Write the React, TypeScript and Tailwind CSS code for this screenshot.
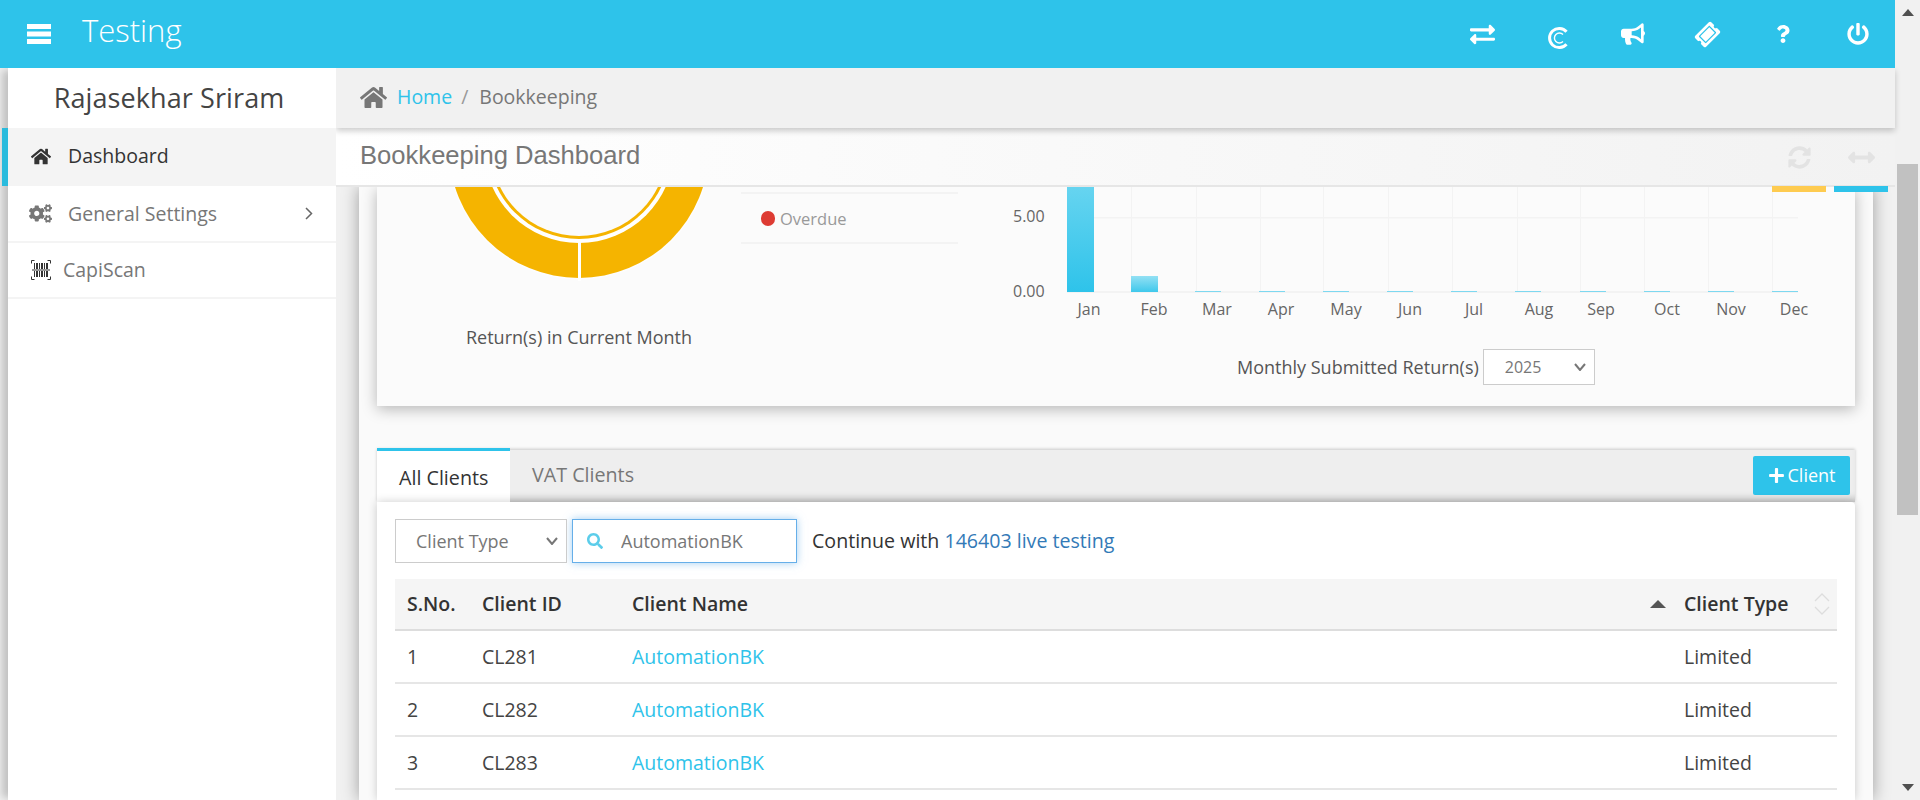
import React from "react";
import { FaExchangeAlt, FaBullhorn, FaTicketAlt, FaQuestion, FaPowerOff, FaHome, FaCogs, FaSyncAlt, FaArrowsAltH, FaSearch, FaPlus } from "react-icons/fa";

const months = ["Jan", "Feb", "Mar", "Apr", "May", "Jun", "Jul", "Aug", "Sep", "Oct", "Nov", "Dec"];
const labelX = [89, 154, 217, 281, 346, 410, 474, 539, 601, 667, 731, 794];
const gridX = [131, 196, 260, 323, 388, 452, 517, 580, 644, 708, 772];
const smallBars = [195, 259, 323, 387, 451, 515, 580, 644, 708, 772];
const rows = [
  ["1", "CL281"],
  ["2", "CL282"],
  ["3", "CL283"],
];

function CopyrightIcon() {
  return (
    <svg className="mt-[7px]" width="22" height="24" viewBox="0 0 22 24" fill="none" stroke="white">
      <path d="M19.5 5.8A9.6 9.6 0 1 0 19.5 18.2" strokeWidth="3" />
      <path d="M16 8.5A5 5 0 1 0 16 15.5" strokeWidth="1.4" />
    </svg>
  );
}

function ScanIcon() {
  return (
    <svg width="20" height="20" viewBox="0 0 20 20" fill="none">
      <path d="M3.5 .5H.5V3.5M16.5 .5H19.5V3.5M3.5 19.5H.5V16.5M16.5 19.5H19.5V16.5" stroke="#333" />
      <path d="M3 3h1v6H3zM5 3h2v6H5zM8 3h1v6H8zM10 3h2v6h-2zM13 3h1v6h-1zM15 3h2v6h-2zM3 11h1v6H3zM5 11h2v6H5zM8 11h1v6H8zM10 11h2v6h-2zM13 11h1v6h-1zM15 11h2v6h-2z" fill="#333" />
      <path d="M1 10h18" stroke="#333" />
    </svg>
  );
}

function Chevron() {
  return (
    <svg className="absolute right-[9px] top-1/2 -translate-y-1/2 pointer-events-none" width="12" height="8" viewBox="0 0 12 8" fill="none" stroke="#777" strokeWidth="2">
      <path d="M1 1l5 6 5-6" />
    </svg>
  );
}

function Header() {
  return (
    <header className="h-[68px] bg-[#2ec3ea] flex items-center justify-between shrink-0 relative z-30">
      <div className="flex items-center text-white">
        <svg className="ml-[27px]" width="24" height="20" viewBox="0 0 24 20" fill="white">
          <path d="M0 0h24v5H0zM0 7.5h24v5H0zM0 15h24v5H0z" />
        </svg>
        <span className="ml-[31px] text-[31px] font-light leading-none -mt-[8px]">Testing</span>
      </div>
      <div className="flex items-center text-white">
        {[
          <FaExchangeAlt key="a" className="text-[25px]" />,
          <CopyrightIcon key="b" />,
          <FaBullhorn key="c" className="text-[24px]" />,
          <FaTicketAlt key="d" className="text-[23px] -rotate-45" />,
          <FaQuestion key="e" className="text-[18px]" />,
          <FaPowerOff key="f" className="text-[22px]" />,
        ].map((icon, i) => (
          <div key={i} className="w-[75px] flex justify-center">{icon}</div>
        ))}
      </div>
    </header>
  );
}

function Sidebar() {
  return (
    <aside className="w-[328px] ml-[8px] bg-white shadow-[-8px_0_8px_-2px_rgba(0,0,0,0.2)] z-20 shrink-0 relative">
      <div className="h-[60px] flex items-center justify-center pr-[6px] text-[27px] text-[#444] tracking-[0.1px]">Rajasekhar Sriram</div>
      <div className="h-[58px] flex items-center bg-[#f4f4f4] border-l-[6px] border-[#2abbdd] -ml-[6px] pl-[23px] pb-[2px] text-[#333] text-[19.5px]">
        <FaHome className="text-[19px] w-[20px]" />
        <span className="ml-[17px]">Dashboard</span>
      </div>
      <div className="h-[57px] flex items-center border-b-2 border-[#f4f4f4] pl-[21px] pr-[23px] text-[#777] text-[19.5px]">
        <FaCogs className="text-[23px] w-[23px]" />
        <span className="ml-[16px] flex-1">General Settings</span>
        <svg width="8" height="13" viewBox="0 0 8 13" fill="none" stroke="#666" strokeWidth="1.5"><path d="M1 1l5.5 5.5L1 12" /></svg>
      </div>
      <div className="h-[56px] flex items-center border-b-2 border-[#f4f4f4] pl-[23px] text-[#777] text-[19.5px]">
        <ScanIcon />
        <span className="ml-[12px]">CapiScan</span>
      </div>
    </aside>
  );
}

function Donut() {
  return (
    <svg width="268" height="100" viewBox="445 187 268 100">
      <circle cx="579" cy="148" r="131.5" fill="#fdfdfd" />
      <circle cx="579" cy="148" r="130" fill="#f5b400" />
      <circle cx="579" cy="148" r="95" fill="#fff" />
      <circle cx="579" cy="148" r="91" fill="#f5b400" />
      <circle cx="579" cy="148" r="88" fill="#fbfbfb" />
      <rect x="578" y="241" width="3" height="40" fill="#fff" />
    </svg>
  );
}

function BarChart() {
  return (
    <svg width="840" height="143" viewBox="0 0 840 143" className="block">
      <defs>
        <linearGradient id="barA" x1="0" y1="0" x2="0" y2="1">
          <stop offset="0" stopColor="#66d4f0" />
          <stop offset="1" stopColor="#2ec3ea" />
        </linearGradient>
        <linearGradient id="barB" x1="0" y1="0" x2="0" y2="1">
          <stop offset="0" stopColor="#93e0f4" />
          <stop offset="1" stopColor="#3fc8ec" />
        </linearGradient>
      </defs>
      {gridX.map((x) => (
        <line key={x} x1={x + 0.5} x2={x + 0.5} y1="0" y2="105" stroke="#f3f3f3" />
      ))}
      <rect x="67" y="30" width="731" height="1.5" fill="#f3f3f3" />
      <rect x="67" y="104" width="731" height="2" fill="#f3f3f3" />
      <rect x="67" y="0" width="27" height="105" fill="url(#barA)" />
      <rect x="131" y="89" width="27" height="16" fill="url(#barB)" />
      {smallBars.map((x) => (
        <rect key={x} x={x} y="104" width="26" height="1" fill="#7dd8f0" />
      ))}
      <g fontSize="16" fill="#666" textAnchor="middle">
        {months.map((m, i) => (
          <text key={m} x={labelX[i]} y="128">{m}</text>
        ))}
      </g>
      <g fontSize="16" fill="#666">
        <text x="13" y="35">5.00</text>
        <text x="13" y="110">0.00</text>
      </g>
    </svg>
  );
}

function SummaryCard() {
  return (
    <section className="h-[219px] bg-[#fbfbfb] shadow-[0_3px_14px_rgba(0,0,0,0.28)] flex shrink-0">
      <div className="w-[364px] pl-[40px] flex flex-col items-center">
        <Donut />
        <div className="mt-[37px] text-[18px] text-[#555]">Return(s) in Current Month</div>
      </div>
      <div className="w-[217px] mt-[5px] self-start h-[52px] border-y-2 border-[#f3f3f3] flex items-center pl-[20px]">
        <span className="w-[14px] h-[15px] rounded-full bg-[#dd3b33]" />
        <span className="ml-[5px] mt-[2px] text-[16.5px] text-[#999]">Overdue</span>
      </div>
      <div className="ml-[42px] flex-1 min-w-0">
        <BarChart />
        <div className="ml-[237px] mt-[19px] flex items-center">
          <span className="text-[18px] text-[#555]">Monthly Submitted Return(s)</span>
          <div className="relative ml-[4px] w-[112px] h-[36px]">
            <select defaultValue="2025" className="appearance-none w-full h-full border border-[#ccc] bg-white pl-[21px] text-[16px] text-[#777]">
              <option>2025</option>
            </select>
            <Chevron />
          </div>
        </div>
      </div>
    </section>
  );
}

function ClientsCard() {
  return (
    <section className="mt-[44px] flex-1 flex flex-col min-h-0">
      <div className="h-[52px] bg-[#eeeeee] shadow-[inset_0_-8px_8px_-6px_rgba(0,0,0,0.22),0_-1px_3px_rgba(0,0,0,0.2)] flex items-start shrink-0">
        <div className="w-[133px] h-[54px] -mt-[2px] bg-white border-t-[3px] border-[#2ec3ea] flex items-center pl-[22px] pt-[2px] text-[19.7px] text-[#333]">All Clients</div>
        <div className="ml-[22px] h-[50px] flex items-center text-[19.7px] text-[#777]">VAT Clients</div>
        <button className="ml-auto mr-[5px] mt-[6px] w-[97px] h-[39px] bg-[#2ec3ea] rounded-[2px] flex items-center justify-center text-white text-[18px]">
          <FaPlus className="text-[17px] mr-[3px]" />
          Client
        </button>
      </div>
      <div className="flex-1 bg-white rounded-tr-[4px] px-[18px] pt-[17px] shadow-[0_0_10px_rgba(0,0,0,0.2)] min-h-0 overflow-hidden">
        <div className="flex items-center h-[44px]">
          <div className="relative w-[172px] h-[44px]">
            <select defaultValue="t" className="appearance-none w-full h-full border border-[#ccc] bg-white pl-[20px] text-[18px] text-[#777]">
              <option value="t">Client Type</option>
            </select>
            <Chevron />
          </div>
          <div className="ml-[5px] w-[225px] h-[44px] border border-[#66afe9] shadow-[0_0_8px_rgba(102,175,233,0.6)] flex items-center pl-[14px]">
            <FaSearch className="text-[16px] text-[#5ccdea] shrink-0" />
            <input defaultValue="AutomationBK" className="ml-[18px] w-[170px] text-[18px] text-[#777] outline-none" />
          </div>
          <span className="ml-[15px] text-[19.6px] text-[#333]">
            Continue with <span className="text-[#337ab7]">146403 live testing</span>
          </span>
        </div>
        <table className="mt-[16px] w-[1442px] table-fixed border-collapse text-[19.5px] text-[#444]">
          <colgroup>
            <col className="w-[75px]" />
            <col className="w-[150px]" />
            <col className="w-[1052px]" />
            <col className="w-[165px]" />
          </colgroup>
          <thead>
            <tr className="h-[51px] bg-[#f5f5f5] border-b-2 border-[#ddd] text-left font-semibold text-[#333]">
              <th className="pl-[12px] font-semibold">S.No.</th>
              <th className="pl-[12px] font-semibold">Client ID</th>
              <th className="pl-[12px] pr-[6px] font-semibold">
                <div className="flex items-center justify-between">
                  Client Name
                  <svg width="16" height="9" viewBox="0 0 16 9"><path d="M8 0L16 8H0z" fill="#555" /></svg>
                </div>
              </th>
              <th className="pl-[12px] pr-[7px] font-semibold">
                <div className="flex items-center justify-between">
                  Client Type
                  <svg width="16" height="22" viewBox="0 0 16 22" fill="none" stroke="#ddd" strokeWidth="1.3"><path d="M1 8l7-7 7 7M1 14l7 7 7-7" /></svg>
                </div>
              </th>
            </tr>
          </thead>
          <tbody>
            {rows.map(([n, id]) => (
              <tr key={n} className="h-[53px] border-b-2 border-[#e6e6e6]">
                <td className="pl-[12px]">{n}</td>
                <td className="pl-[12px]">{id}</td>
                <td className="pl-[12px] text-[#2ec3ea]">AutomationBK</td>
                <td className="pl-[12px]">Limited</td>
              </tr>
            ))}
          </tbody>
        </table>
      </div>
    </section>
  );
}

function Scrollbar() {
  return (
    <div className="w-[25px] h-[800px] bg-[#f1f1f1] flex flex-col items-center shrink-0">
      <svg className="mt-[9px]" width="12" height="7" viewBox="0 0 12 7"><path d="M6 0l6 7H0z" fill="#505050" /></svg>
      <div className="mt-[148px] w-[21px] h-[351px] bg-[#c1c1c1]" />
      <svg className="mt-auto mb-[9px]" width="12" height="7" viewBox="0 0 12 7"><path d="M6 7L0 0h12z" fill="#505050" /></svg>
    </div>
  );
}

export default function App() {
  return (
    <div className="w-[1920px] h-[800px] flex overflow-hidden bg-[#f1f1f1] font-['Open_Sans',sans-serif]">
      <div className="w-[1895px] flex flex-col shrink-0">
        <Header />
        <div className="flex-1 flex min-h-0 bg-[#f1f1f1]">
          <Sidebar />
          <main className="flex-1 flex flex-col min-w-0 bg-[#f1f1f1]">
            <div className="h-[60px] bg-[#f1f1f1] flex items-center pl-[24px] pb-[2px] shadow-[0_3px_6px_rgba(0,0,0,0.2)] z-10 shrink-0 text-[19.5px]">
              <FaHome className="text-[27px] text-[#777]" />
              <span className="ml-[10px] text-[#2ec3ea]">Home</span>
              <span className="ml-[9px] text-[#999]">/</span>
              <span className="ml-[11px] text-[#777]">Bookkeeping</span>
            </div>
            <div className="h-[59px] bg-gradient-to-r from-white to-[#f2f2f2] border-b-2 border-[#e6e6e6] flex items-start pl-[24px] z-[5] shrink-0">
              <h1 className="mt-[12px] text-[25.6px] leading-[30px] text-[#777] font-['Liberation_Sans',sans-serif]">Bookkeeping Dashboard</h1>
              <div className="ml-auto mr-[7px] flex gap-[8px]">
                <div className="w-[54px] h-[64px] border-b-[6px] border-[#fecb50] flex items-center justify-center">
                  <FaSyncAlt className="text-[23px] text-[#e3e3e3]" />
                </div>
                <div className="w-[54px] h-[64px] border-b-[6px] border-[#2ec3ea] flex items-center justify-center">
                  <FaArrowsAltH className="text-[27px] text-[#e3e3e3]" />
                </div>
              </div>
            </div>
            <div className="flex-1 min-h-0 flex pl-[23px] pr-[22px] overflow-hidden">
              <div className="flex-1 min-w-0 bg-[#fafafa] shadow-[0_0_16px_rgba(0,0,0,0.35)] px-[18px] flex flex-col">
                <SummaryCard />
                <ClientsCard />
              </div>
            </div>
          </main>
        </div>
      </div>
      <Scrollbar />
    </div>
  );
}
